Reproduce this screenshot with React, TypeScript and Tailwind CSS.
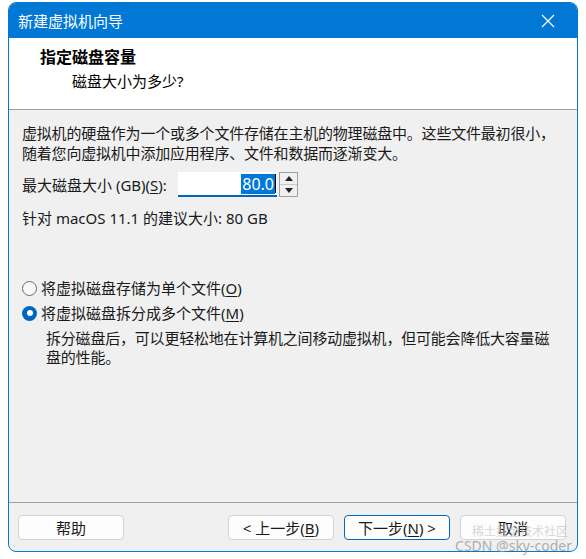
import React from "react";

const font = '"Noto Sans", "Noto Sans CJK SC", sans-serif';

const U = ({ children }: { children: React.ReactNode }) => (
  <span className="underline underline-offset-2">{children}</span>
);

const Radio = ({ checked }: { checked?: boolean }) =>
  checked ? (
    <span className="w-[15px] h-[15px] rounded-full bg-[#0067c0] flex items-center justify-center shrink-0">
      <span className="w-[6px] h-[6px] rounded-full bg-white" />
    </span>
  ) : (
    <span className="w-[15px] h-[15px] rounded-full border border-[#6b6b6b] bg-[#f8f8f8] shrink-0" />
  );

const Btn = ({
  children,
  primary,
}: {
  children: React.ReactNode;
  primary?: boolean;
}) => (
  <button
    className={
      "w-[106px] h-[25px] rounded-[4px] bg-[#fdfdfd] text-[15px] leading-[20px] text-[#1a1a1a] flex items-center justify-center " +
      (primary ? "border border-[#0067c0]" : "border border-[#d2d2d2]")
    }
  >
    {children}
  </button>
);

export default function App() {
  return (
    <div className="w-[586px] h-[559px] bg-white relative" style={{ fontFamily: font }}>
      <div className="ml-2 mt-[2px] w-[570px] h-[550px] rounded-[8px] border border-[#0078d4] overflow-hidden flex flex-col bg-[#f0f0f0]">
        {/* Title bar */}
        <div className="h-[35px] bg-[#0078d4] flex items-center justify-between pl-[9px] pr-[22px] shrink-0">
          <span className="text-white text-[15px] leading-[20px]">新建虚拟机向导</span>
          <svg width="14" height="14" viewBox="0 0 14 14">
            <path d="M1 1L13 13M13 1L1 13" stroke="white" strokeWidth="1.2" />
          </svg>
        </div>

        {/* Header */}
        <div className="h-[72px] bg-white border-b border-[#a0a0a0] pt-[9px] pl-[31px] shrink-0">
          <div className="text-[16px] leading-[20px] font-bold text-black">指定磁盘容量</div>
          <div className="mt-[4px] ml-[32px] text-[15px] leading-[20px] text-black">磁盘大小为多少?</div>
        </div>

        {/* Body */}
        <div className="flex-1 px-[13px] pt-[13px] text-[15px] leading-[20px] text-[#1a1a1a]">
          <p className="tracking-[-0.2px]">
            虚拟机的硬盘作为一个或多个文件存储在主机的物理磁盘中。这些文件最初很小，
            <br />
            随着您向虚拟机中添加应用程序、文件和数据而逐渐变大。
          </p>

          <div className="mt-[9px] flex items-center h-[25px]">
            <span className="w-[156px]">
              最大磁盘大小 (GB)(<U>S</U>):
            </span>
            <div className="w-[99px] h-[25px] bg-white border-b-2 border-[#0067c0] flex items-center justify-end pr-[1px]">
              <span className="bg-[#0078d7] text-white text-[16px] leading-[20px] px-[1px]">80.0</span>
              <span className="w-[1px] h-[19px] bg-black" />
            </div>
            <div className="ml-[2px] w-[19px] h-[25px] border border-[#a0a0a0] bg-[#f0f0f0] flex flex-col">
              <div className="flex-1 border-b border-[#c8c8c8] flex items-center justify-center">
                <svg width="8" height="5" viewBox="0 0 8 5">
                  <path d="M0 5L4 0L8 5Z" fill="#222" />
                </svg>
              </div>
              <div className="flex-1 flex items-center justify-center">
                <svg width="8" height="5" viewBox="0 0 8 5">
                  <path d="M0 0L8 0L4 5Z" fill="#222" />
                </svg>
              </div>
            </div>
          </div>

          <p className="mt-[11px]">针对 macOS 11.1 的建议大小: 80 GB</p>

          <div className="mt-[50px] flex items-center gap-[4px]">
            <Radio />
            <span>
              将虚拟磁盘存储为单个文件(<U>O</U>)
            </span>
          </div>
          <div className="mt-[5px] flex items-center gap-[4px]">
            <Radio checked />
            <span>
              将虚拟磁盘拆分成多个文件(<U>M</U>)
            </span>
          </div>
          <p className="mt-[6px] ml-[24px] leading-[19px] tracking-[-0.2px]">
            拆分磁盘后，可以更轻松地在计算机之间移动虚拟机，但可能会降低大容量磁
            <br />
            盘的性能。
          </p>
        </div>

        {/* Footer */}
        <div className="h-[49px] border-t border-[#a0a0a0] flex items-start pt-[12px] pl-[9px] pr-[11px] shrink-0">
          <Btn>帮助</Btn>
          <div className="flex-1" />
          <div className="flex gap-[10px]">
            <Btn>
              &lt; 上一步(<U>B</U>)
            </Btn>
            <Btn primary>
              下一步(<U>N</U>) &gt;
            </Btn>
            <Btn>取消</Btn>
          </div>
        </div>
      </div>

      {/* Watermark */}
      <div className="absolute right-[14px] bottom-[8px] text-right pointer-events-none">
        <div className="text-[12px] leading-[13px] text-[#c4c4c4]/70 pr-[4px]">稀土掘金技术社区</div>
        <div className="text-[14px] leading-[15px] text-[#9a9a9a]/80">CSDN @sky-coder</div>
      </div>
    </div>
  );
}
